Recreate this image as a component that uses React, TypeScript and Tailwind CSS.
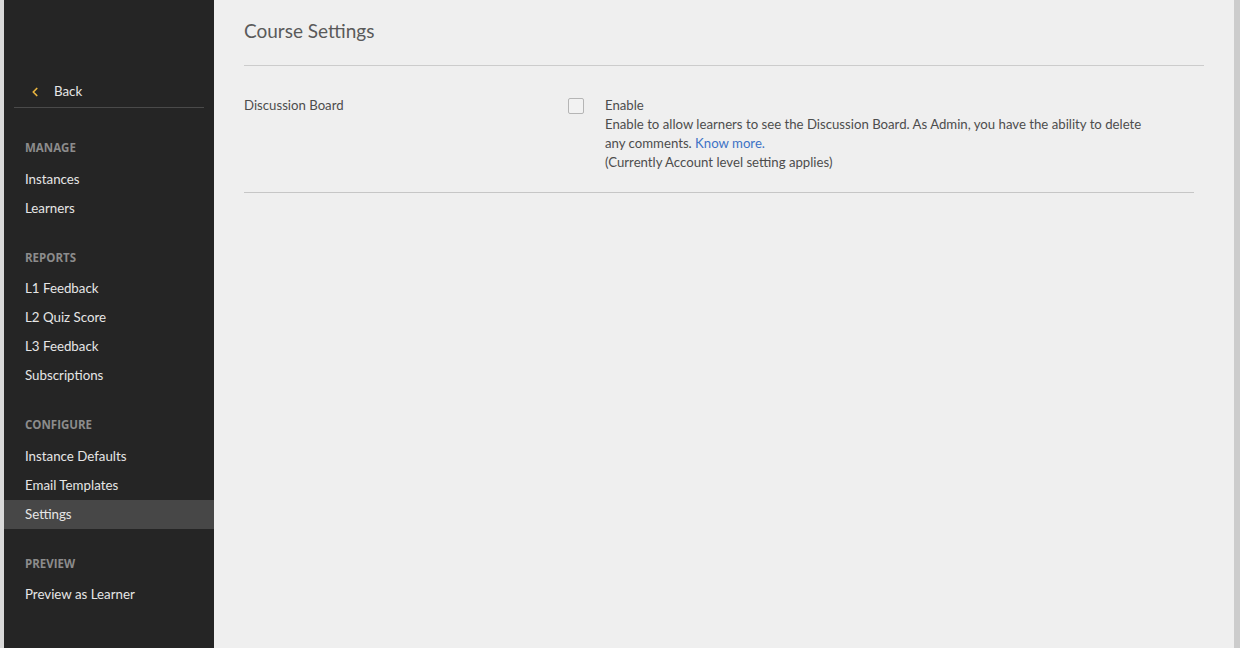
import { ChevronLeft } from "lucide-react";

const sections = [
  { title: "MANAGE", items: ["Instances", "Learners"] },
  { title: "REPORTS", items: ["L1 Feedback", "L2 Quiz Score", "L3 Feedback", "Subscriptions"] },
  { title: "CONFIGURE", items: ["Instance Defaults", "Email Templates", "Settings"] },
  { title: "PREVIEW", items: ["Preview as Learner"] },
];

const Sidebar = () => {
  return (
    <aside className="w-[210px] shrink-0 bg-[#252525] pt-[80px]">
      <div className="mx-[10px] flex h-[28px] items-center border-b border-[#4a4a4a] pb-[3px] text-[13.3px] text-[#e6e6e6]">
        <ChevronLeft className="ml-[14px] h-[14px] w-[14px] text-[#e8b43f]" strokeWidth={3} />
        <span className="ml-[12px]">Back</span>
      </div>
      <nav className="pt-[26px]">
        {sections.map((s) => (
          <div key={s.title} className="mb-[20.5px]">
            <div
              className="flex h-[28px] items-center px-[21px] text-[11.5px] font-bold text-[#8c8c8c]"
              style={{ fontFamily: "'Open Sans', Lato, sans-serif" }}
            >
              {s.title}
            </div>
            <div className="pt-[3px]">
              {s.items.map((item) => (
                <div
                  key={item}
                  className={
                    "flex h-[29px] items-center px-[21px] text-[13.3px] text-[#e6e6e6] " +
                    (item === "Settings" ? "bg-[#474747]" : "")
                  }
                >
                  {item}
                </div>
              ))}
            </div>
          </div>
        ))}
      </nav>
    </aside>
  );
};

export default function App() {
  return (
    <div
      className="flex h-[648px] w-[1240px] overflow-hidden bg-[#d9d9d9] pl-[4px]"
      style={{ fontFamily: "Lato, 'Open Sans', sans-serif" }}
    >
      <Sidebar />
      <main className="flex-1 bg-[#efefef] pl-[30px] pr-[30px] text-[#4d4d4d]">
        <div className="border-b border-[#cccccc] pt-[17px] pb-[21px]">
          <h1 className="text-[19px] leading-[27px] text-[#5a5a5a]">Course Settings</h1>
        </div>
        <div className="mr-[10px] flex border-b border-[#c6c6c6] pt-[30px] pb-[20px] text-[13.2px] leading-[19px]">
          <div className="w-[324px] shrink-0">Discussion Board</div>
          <div className="mt-[2px] h-[16px] w-[16px] shrink-0 rounded-[2px] border border-[#b5b5b5] bg-[#f2f2f2]"></div>
          <div className="ml-[21px] w-[550px]">
            <div>Enable</div>
            <div>
              Enable to allow learners to see the Discussion Board. As Admin, you have the ability to delete any
              comments. <span className="text-[#3d73c6]">Know more.</span>
            </div>
            <div>(Currently Account level setting applies)</div>
          </div>
        </div>
      </main>
      <div className="w-[6px] shrink-0 bg-[#cccccc]"></div>
    </div>
  );
}
